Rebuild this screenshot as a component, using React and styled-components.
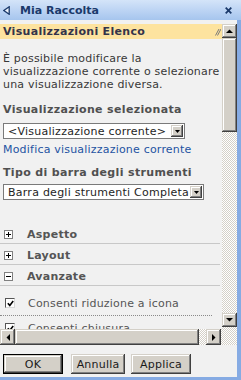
import React from "react";
import styled, { createGlobalStyle, css } from "styled-components";

const Global = createGlobalStyle`
  html, body { margin: 0; padding: 0; background: #f1f1f1; }
  body { width: 241px; height: 380px; overflow: hidden; font-family: "DejaVu Sans", sans-serif; }
`;

const bevel = css`
  background: #d4d0c8;
  box-shadow: inset -1px -1px #404040, inset 1px 1px #d4d0c8, inset -2px -2px #808080, inset 2px 2px #fff;
`;

const checker = css`
  background-color: #d4d0c8;
  background-image: conic-gradient(#fff 25%, transparent 0 50%, #fff 0 75%, transparent 0);
  background-size: 2px 2px;
`;

const Panel = styled.div`
  width: 241px;
  height: 380px;
  display: flex;
  flex-direction: column;
  font-family: "DejaVu Sans", sans-serif;
  font-size: 11px;
`;

const TitleBar = styled.div`
  height: 20px;
  flex: none;
  display: flex;
  align-items: center;
  padding: 0 9px 0 3px;
  background: linear-gradient(#d4e4f9, #a6c5ee);
  color: #1b3a6b;
`;

const Title = styled.span`
  flex: 1;
  margin-left: 10px;
  font-weight: bold;
  font-size: 11px;
  line-height: 13px;
`;

const Frame = styled.div`
  flex: 1;
  display: flex;
  flex-direction: column;
  padding-top: 4px;
  background: #f1f1f1;
  border-right: 4px solid #86abe3;
  border-bottom: 3px solid #86abe3;
`;

const ScrollArea = styled.div`
  height: 305px;
  flex: none;
  display: flex;
`;

const Content = styled.div`
  width: 222px;
  flex: none;
  overflow: hidden;
  display: flex;
  flex-direction: column;
`;

const Band = styled.div`
  height: 15px;
  flex: none;
  display: flex;
  align-items: center;
  justify-content: space-between;
  padding: 0 1px 0 3px;
  background: #fde39f;
  color: #33334a;
  font-weight: bold;
  letter-spacing: 0.3px;
`;

const Body = styled.div`
  padding: 0 2px 0 3px;
  display: flex;
  flex-direction: column;
  color: #383838;
  letter-spacing: 0.2px;
  line-height: 13px;
`;

const Para = styled.p`
  margin: 13px 0 0;
`;

const Label = styled.div`
  margin-top: ${(p) => p.$mt}px;
  font-weight: bold;
  color: #505050;
  letter-spacing: 0.35px;
`;

const Select = styled.div`
  margin-top: ${(p) => p.$mt}px;
  width: ${(p) => p.$w}px;
  height: 16px;
  box-sizing: border-box;
  border: 1px solid #7a7a7a;
  background: #fff;
  display: flex;
  align-items: center;
  padding-left: ${(p) => p.$pl}px;
  color: #1e1e1e;
  letter-spacing: 0.25px;
`;

const SelectText = styled.span`
  flex: 1;
  white-space: nowrap;
  overflow: hidden;
`;

const DropBtn = styled.span`
  ${bevel};
  width: 12px;
  height: 12px;
  margin-right: 1px;
  flex: none;
  display: flex;
  align-items: center;
  justify-content: center;
`;

const Link = styled.a`
  margin-top: 4px;
  color: #2453a2;
  text-decoration: none;
`;

const Sections = styled.div`
  margin: 23px 0 0 -3px;
  display: flex;
  flex-direction: column;
`;

const Section = styled.div`
  height: 20px;
  border-bottom: 1px solid #c8c8c8;
  display: flex;
  align-items: flex-start;
  padding: 5px 0 0 4px;
  box-sizing: content-box;
  height: 15px;
  font-weight: bold;
  color: #555;
  letter-spacing: 0.25px;
`;

const ToggleBox = styled.span`
  width: 9px;
  height: 9px;
  margin-top: 2px;
  box-sizing: border-box;
  border: 1px solid #808080;
  background: #fff;
  flex: none;
  display: flex;
  align-items: center;
  justify-content: center;
`;

const SectionText = styled.span`
  margin-left: 14px;
`;

const CheckRow = styled.div`
  margin: ${(p) => (p.$first ? 5 : 0)}px 8px 0 -3px;
  padding: 6px 0 5px 5px;
  border-bottom: 1px dotted #8a8a8a;
  display: flex;
  align-items: flex-start;
  color: #555;
  flex: none;
`;

const CheckBox = styled.span`
  width: 10px;
  height: 10px;
  margin-top: 1px;
  box-sizing: border-box;
  background: #fff;
  border-top: 1px solid #555;
  border-left: 1px solid #555;
  border-right: 1px solid #d8d8d8;
  border-bottom: 1px solid #d8d8d8;
  flex: none;
  display: flex;
  align-items: center;
  justify-content: center;
`;

const CheckText = styled.span`
  margin-left: 13px;
  white-space: nowrap;
`;

const VScroll = styled.div`
  width: 15px;
  flex: none;
  display: flex;
  flex-direction: column;
  ${checker};
`;

const ArrowBtn = styled.div`
  ${bevel};
  width: ${(p) => p.$w}px;
  height: ${(p) => p.$h}px;
  flex: none;
  display: flex;
  align-items: center;
  justify-content: center;
`;

const Thumb = styled.div`
  ${bevel};
  flex: none;
  width: ${(p) => (p.$w ? `${p.$w}px` : "auto")};
  height: ${(p) => (p.$h ? `${p.$h}px` : "auto")};
`;

const Track = styled.div`
  flex: 1;
`;

const HRow = styled.div`
  height: 16px;
  flex: none;
  display: flex;
`;

const HScroll = styled.div`
  width: 221px;
  flex: none;
  display: flex;
  ${checker};
`;

const Corner = styled.div`
  flex: 1;
  ${checker};
`;

const ButtonBar = styled.div`
  display: flex;
  gap: 6px;
  padding: 9px 0 0 3px;
`;

const Btn = styled.button`
  ${bevel};
  width: ${(p) => p.$w}px;
  height: 20px;
  margin-right: ${(p) => (p.$default ? 2 : 0)}px;
  border: ${(p) => (p.$default ? "1px solid #000" : "none")};
  box-sizing: border-box;
  padding: 0;
  font-family: "DejaVu Sans", sans-serif;
  font-size: 11px;
  letter-spacing: 0.2px;
  color: #1a1a1a;
`;

const Tri = ({ dir }) => {
  const pts = {
    up: "0,4 3.5,0.5 7,4",
    down: "0,0 7,0 3.5,3.5",
    left: "4,0 4,7 0.5,3.5",
    right: "0,0 0,7 3.5,3.5",
  }[dir];
  const vertical = dir === "up" || dir === "down";
  return (
    <svg width={vertical ? 7 : 4} height={vertical ? 4 : 7} viewBox={vertical ? "0 0 7 4" : "0 0 4 7"}>
      <polygon points={pts} fill="#000" />
    </svg>
  );
};

const SmallDown = () => (
  <svg width="5" height="3" viewBox="0 0 5 3">
    <polygon points="0,0 5,0 2.5,3" fill="#000" />
  </svg>
);

const Plus = () => (
  <svg width="7" height="7" viewBox="0 0 7 7">
    <path d="M1 3.5H6M3.5 1V6" stroke="#000" strokeWidth="1" />
  </svg>
);

const Minus = () => (
  <svg width="7" height="7" viewBox="0 0 7 7">
    <path d="M1 3.5H6" stroke="#000" strokeWidth="1" />
  </svg>
);

const Check = () => (
  <svg width="7" height="7" viewBox="0 0 7 7">
    <path d="M0.8 3.2L2.8 5.4L6.2 1" fill="none" stroke="#000" strokeWidth="1.6" />
  </svg>
);

export default function App() {
  return (
    <>
      <Global />
      <Panel>
        <TitleBar>
          <svg width="7" height="9" viewBox="0 0 7 9">
            <polygon points="6.2,0.7 0.8,4.5 6.2,8.3" fill="#eef4fd" stroke="#1b3a6b" strokeWidth="1.3" />
          </svg>
          <Title>Mia Raccolta</Title>
          <svg width="7" height="7" viewBox="0 0 7 7">
            <path d="M0.7 0.7L6.3 6.3M6.3 0.7L0.7 6.3" stroke="#1b3a6b" strokeWidth="1.8" />
          </svg>
        </TitleBar>
        <Frame>
          <ScrollArea>
            <Content>
              <Band>
                <span>Visualizzazioni Elenco</span>
                <svg width="6" height="8" viewBox="0 0 6 8">
                  <path d="M0.5 7.5L4 1M2.5 7.5L6 1" stroke="#7a7a7a" strokeWidth="1" />
                </svg>
              </Band>
              <Body>
                <Para>
                  È possibile modificare la
                  <br />
                  visualizzazione corrente o selezionare
                  <br />
                  una visualizzazione diversa.
                </Para>
                <Label $mt={12}>Visualizzazione selezionata</Label>
                <Select $mt={7} $w={182} $pl={4}>
                  <SelectText>&lt;Visualizzazione corrente&gt;</SelectText>
                  <DropBtn>
                    <SmallDown />
                  </DropBtn>
                </Select>
                <Link href="#">Modifica visualizzazione corrente</Link>
                <Label $mt={10}>Tipo di barra degli strumenti</Label>
                <Select $mt={5} $w={201} $pl={4}>
                  <SelectText>Barra degli strumenti Completa</SelectText>
                  <DropBtn>
                    <SmallDown />
                  </DropBtn>
                </Select>
                <Sections>
                  <Section>
                    <ToggleBox>
                      <Plus />
                    </ToggleBox>
                    <SectionText>Aspetto</SectionText>
                  </Section>
                  <Section>
                    <ToggleBox>
                      <Plus />
                    </ToggleBox>
                    <SectionText>Layout</SectionText>
                  </Section>
                  <Section>
                    <ToggleBox>
                      <Minus />
                    </ToggleBox>
                    <SectionText>Avanzate</SectionText>
                  </Section>
                </Sections>
                <CheckRow $first>
                  <CheckBox>
                    <Check />
                  </CheckBox>
                  <CheckText>Consenti riduzione a icona</CheckText>
                </CheckRow>
                <CheckRow>
                  <CheckBox>
                    <Check />
                  </CheckBox>
                  <CheckText>Consenti chiusura</CheckText>
                </CheckRow>
              </Body>
            </Content>
            <VScroll>
              <ArrowBtn $w={15} $h={14}>
                <Tri dir="up" />
              </ArrowBtn>
              <Thumb $h={94} />
              <Track />
              <ArrowBtn $w={15} $h={14}>
                <Tri dir="down" />
              </ArrowBtn>
              <Track style={{ flex: "none", height: 2 }} />
            </VScroll>
          </ScrollArea>
          <HRow>
            <HScroll>
              <ArrowBtn $w={15} $h={16}>
                <Tri dir="left" />
              </ArrowBtn>
              <Thumb $w={184} />
              <Track />
              <ArrowBtn $w={15} $h={16}>
                <Tri dir="right" />
              </ArrowBtn>
            </HScroll>
            <Corner />
          </HRow>
          <ButtonBar>
            <Btn $w={60} $default>
              OK
            </Btn>
            <Btn $w={54}>Annulla</Btn>
            <Btn $w={60}>Applica</Btn>
          </ButtonBar>
        </Frame>
      </Panel>
    </>
  );
}
